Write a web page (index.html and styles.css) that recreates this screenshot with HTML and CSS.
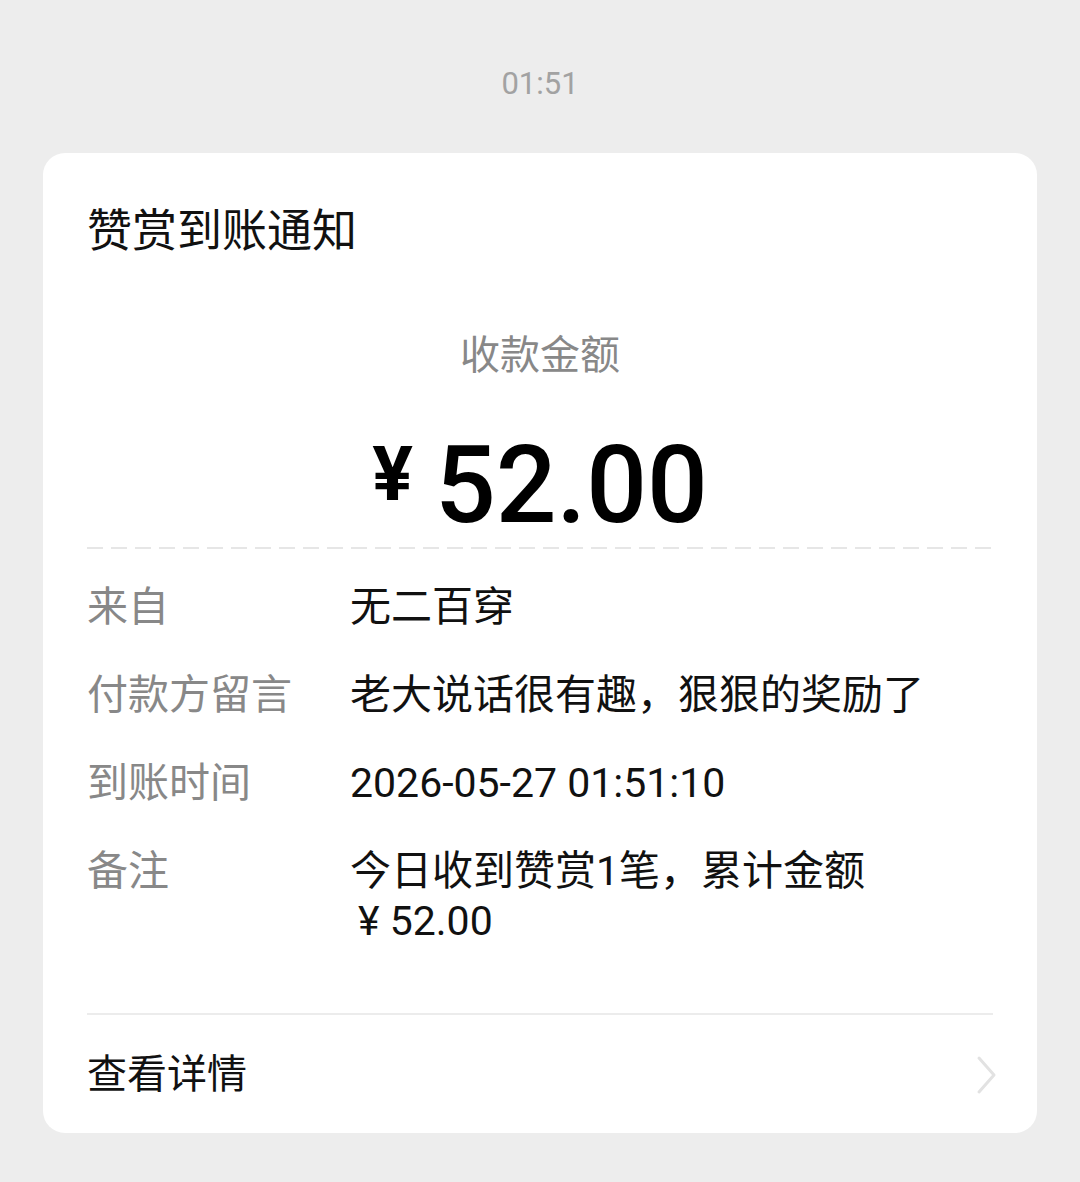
FILE: index.html
```html
<!DOCTYPE html>
<html lang="zh-CN">
<head>
  <meta charset="UTF-8">
  <meta name="viewport" content="width=device-width, initial-scale=1.0">
  <title>赞赏到账通知</title>
  <link rel="stylesheet" href="styles.css">
</head>
<body>
  <div class="time">01:51</div>

  <div class="card">
    <h1 class="title">赞赏到账通知</h1>

    <div class="amount-label">收款金额</div>
    <div class="amount"><span class="yen">¥</span>52.00</div>

    <div class="dashed"></div>

    <div class="rows">
      <div class="row">
        <div class="label">来自</div>
        <div class="value">无二百穿</div>
      </div>
      <div class="row">
        <div class="label">付款方留言</div>
        <div class="value">老大说话很有趣，狠狠的奖励了</div>
      </div>
      <div class="row">
        <div class="label">到账时间</div>
        <div class="value">2026-05-27 01:51:10</div>
      </div>
      <div class="row">
        <div class="label">备注</div>
        <div class="value">今日收到赞赏1笔，累计金额<span class="nowrap">¥ 52.00</span></div>
      </div>
    </div>

    <div class="footer">
      <span>查看详情</span>
      <svg class="chevron" width="22" height="40" viewBox="0 0 22 40">
        <polyline points="4,3 19,20 4,37" fill="none" stroke="#e2e2e2" stroke-width="3" stroke-linecap="round" stroke-linejoin="round"/>
      </svg>
    </div>
  </div>
</body>
</html>
```

FILE: styles.css
```css
body {
  margin: 0;
  background-color: #ededed;
  font-family: Roboto, "Noto Sans CJK SC", sans-serif;
  color: #111;
}
.time {
  padding-top: 64px;
  height: 40px;
  line-height: 40px;
  text-align: center;
  font-size: 31px;
  color: #a2a2a2;
}
.card {
  margin: 49px 43px 0;
  padding: 0 44px 0 44px;
  background-color: #fff;
  border-radius: 22px;
}
.title {
  margin: 0;
  padding-top: 47px;
  font-size: 45px;
  font-weight: 400;
  line-height: 56px;
  font-family: "Noto Sans CJK SC", sans-serif;
}
.amount-label {
  margin-top: 71px;
  text-align: center;
  font-size: 40px;
  line-height: 50px;
  color: #888;
  font-family: "Noto Sans CJK SC", sans-serif;
}
.amount {
  margin-top: 42px;
  text-align: center;
  font-size: 107px;
  font-weight: 500;
  line-height: 110px;
  color: #000;
}
.yen {
  font-size: 76px;
  font-weight: 700;
  vertical-align: 22px;
  margin-right: 22px;
}
.dashed {
  margin-top: 6px;
  height: 2px;
  background: repeating-linear-gradient(to right, #e6e6e6 0, #e6e6e6 16px, transparent 16px, transparent 24px);
}
.rows {
  padding-top: 33px;
  display: flex;
  flex-direction: column;
  gap: 38px;
}
.row {
  display: flex;
  font-size: 41px;
  line-height: 50px;
}
.label {
  width: 263px;
  flex-shrink: 0;
  color: #888;
}
.value {
  flex: 1;
  color: #111;
}
.nowrap {
  display: inline-block;
  white-space: nowrap;
  padding-left: 8px;
}
.footer {
  margin-top: 67px;
  border-top: 2px solid #ececec;
  padding: 35px 0 33px;
  display: flex;
  justify-content: space-between;
  align-items: center;
  font-size: 40px;
  line-height: 50px;
}
.chevron {
  margin-right: -4px;
}
```
